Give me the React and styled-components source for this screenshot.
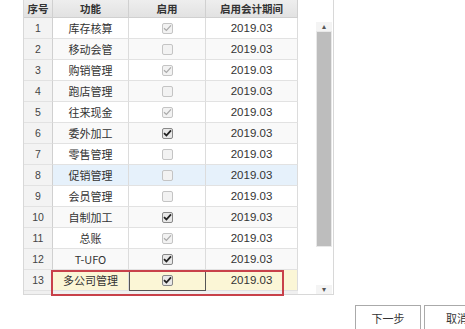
import styled, { createGlobalStyle } from 'styled-components';

const rows = [
	{ no: 1, name: '库存核算', state: 'locked' },
	{ no: 2, name: '移动会管', state: 'off' },
	{ no: 3, name: '购销管理', state: 'locked' },
	{ no: 4, name: '跑店管理', state: 'off' },
	{ no: 5, name: '往来现金', state: 'locked' },
	{ no: 6, name: '委外加工', state: 'on' },
	{ no: 7, name: '零售管理', state: 'off' },
	{ no: 8, name: '促销管理', state: 'off', tone: 'hover' },
	{ no: 9, name: '会员管理', state: 'off' },
	{ no: 10, name: '自制加工', state: 'on' },
	{ no: 11, name: '总账', state: 'locked' },
	{ no: 12, name: 'T-UFO', state: 'on' },
	{ no: 13, name: '多公司管理', state: 'on', tone: 'selected' },
];

function Check({ state }) {
	return (
		<Box $state={state}>
			{state !== 'off' ? (
				<svg width="9" height="8" viewBox="0 0 9 8">
					<path
						d="M1 4.2 L3.4 6.5 L8 1.3"
						fill="none"
						stroke={state === 'on' ? '#222' : '#aaa'}
						strokeWidth={state === 'on' ? 1.8 : 1.2}
					/>
				</svg>
			) : null}
		</Box>
	);
}

function App() {
	return (
		<>
			<GlobalStyle />
			<Page>
				<Panel>
					<Grid>
						<Head>序号</Head>
						<Head>功能</Head>
						<Head>启用</Head>
						<Head>启用会计期间</Head>
						{rows.map((r, i) => (
							<Row key={r.no} $tone={r.tone} $alt={i % 2 === 1}>
								<NoCell>{r.no}</NoCell>
								<Cell>{r.name}</Cell>
								<Cell $framed={r.tone === 'selected'}>
									<Check state={r.state} />
								</Cell>
								<Cell $num>2019.03</Cell>
							</Row>
						))}
						<Mark />
					</Grid>
					<Scrollbar>
						<Arrow>▴</Arrow>
						<Thumb />
						<Arrow>▾</Arrow>
					</Scrollbar>
				</Panel>
				<Footer>
					<Button>下一步</Button>
					<Button>取消</Button>
				</Footer>
			</Page>
		</>
	);
}

const GlobalStyle = createGlobalStyle`
	body {
		margin: 0;
		background: #fff;
		font-family: "Noto Sans CJK SC", "Liberation Sans", sans-serif;
		font-size: 11px;
		color: #333;
	}
`;

const Page = styled.div`
	width: 465px;
	height: 329px;
	overflow: hidden;
	padding-left: 23px;
	box-sizing: border-box;
`;

const Panel = styled.div`
	width: 311px;
	height: 296px;
	margin-top: -1px;
	border: 1px solid #d8d8d8;
	box-sizing: border-box;
	display: flex;
	justify-content: space-between;
	background: #fff;
`;

const Grid = styled.div`
	position: relative;
	width: 274px;
	display: grid;
	grid-template-columns: 29px 76px 77px 92px;
	grid-auto-rows: 21px;
	grid-template-rows: 18px;
	background: #f0f0f0;
	align-content: start;
	height: 294px;
`;

const Head = styled.div`
	display: flex;
	align-items: center;
	justify-content: center;
	font-weight: bold;
	font-size: 10.5px;
	color: #333;
	background: linear-gradient(#eeeeee, #e2e2e2);
	border-right: 1px solid #d0d0d0;
	border-bottom: 1px solid #d0d0d0;
`;

const Row = styled.div`
	display: contents;
	--bg: ${(p) =>
		p.$tone === 'hover'
			? '#e6f1fb'
			: p.$tone === 'selected'
			? '#fbf6d6'
			: p.$alt
			? '#f9f9f9'
			: '#ffffff'};
`;

const Cell = styled.div`
	display: flex;
	align-items: center;
	justify-content: center;
	background: var(--bg);
	border-right: 1px solid #dcdcdc;
	border-bottom: 1px solid #e2e2e2;
	font-family: ${(p) =>
		p.$num ? '"Liberation Sans", Arial, sans-serif' : '"Noto Sans CJK SC", sans-serif'};
	font-size: ${(p) => (p.$num ? '11.5px' : '11px')};
	color: #333;
	box-sizing: border-box;
	${(p) =>
		p.$framed
			? 'border-right: 1px solid #555; border-bottom: 1px solid #555; box-shadow: inset 1px 0 #555;'
			: ''}
`;

const NoCell = styled(Cell)`
	background: #f3f3f3;
	font-family: "Liberation Sans", Arial, sans-serif;
	font-size: 10.5px;
	color: #444;
	border-right: 1px solid #d0d0d0;
`;

const Box = styled.span`
	width: 9px;
	height: 9px;
	border: 1px solid ${(p) => (p.$state === 'on' ? '#888' : '#c4c4c4')};
	border-radius: 2px;
	background: ${(p) => (p.$state === 'on' ? '#e8e8e8' : '#f2f2f2')};
	display: flex;
	align-items: center;
	justify-content: center;
`;

const Mark = styled.div`
	position: absolute;
	left: 27px;
	top: 270px;
	width: 233px;
	height: 26px;
	border: 2px solid #c8414a;
	box-sizing: border-box;
	pointer-events: none;
`;

const Scrollbar = styled.div`
	width: 16px;
	margin-right: 1px;
	display: flex;
	flex-direction: column;
	align-items: stretch;
	padding-top: 22px;
	background: #fff;
`;

const Arrow = styled.div`
	height: 9px;
	font-size: 8px;
	line-height: 9px;
	text-align: center;
	color: #555;
	background: #f4f4f4;
	font-family: "DejaVu Sans", sans-serif;
	&:last-child {
		margin-top: 38px;
	}
`;

const Thumb = styled.div`
	height: 217px;
	background: #bdbdbd;
	border: 1px solid #e8e8e8;
	box-sizing: border-box;
`;

const Footer = styled.div`
	display: flex;
	gap: 3px;
	margin-left: 332px;
	margin-top: 10px;
`;

const Button = styled.div`
	width: 66px;
	height: 26px;
	flex-shrink: 0;
	border: 1px solid #aaa;
	box-sizing: border-box;
	display: flex;
	align-items: center;
	justify-content: center;
	font-size: 11px;
	color: #333;
	background: #fff;
`;

export default App;
